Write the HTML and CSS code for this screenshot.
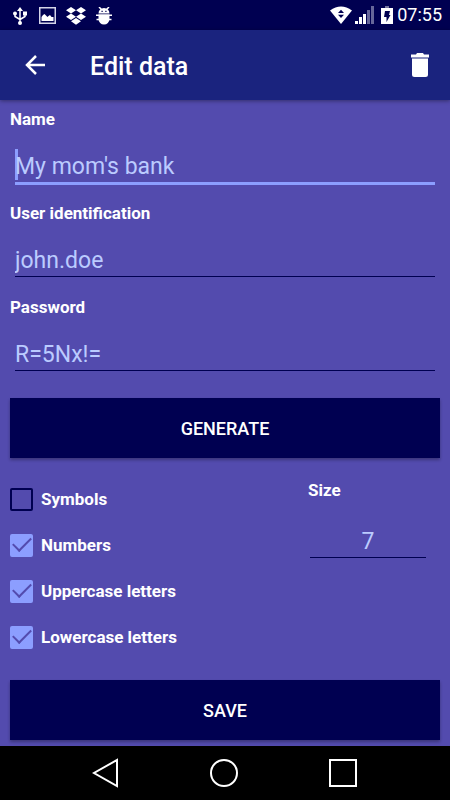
FILE: index.html
```html
<!DOCTYPE html>
<html lang="en">
<head>
    <meta charset="UTF-8">
    <meta name="viewport" content="width=device-width, initial-scale=1.0">
    <title>Edit data</title>
    <link rel="stylesheet" href="styles.css">
</head>
<body>
    <div class="status-bar">
        <div class="status-left">
            <!-- usb -->
            <svg width="14" height="18" viewBox="0 0 14 18">
                <path d="M7 2v14M2 6v3.500l5 3M12 6v3.500l-5 3" fill="none" stroke="#fff" stroke-width="1.500"/>
                <path d="M7 0l3 4H4z" fill="#fff"/>
                <circle cx="2" cy="6.500" r="2" fill="#fff"/>
                <path d="M10 4.500h4v4h-4z" fill="#fff"/>
                <circle cx="7" cy="16" r="2" fill="#fff"/>
            </svg>
            <!-- picture -->
            <svg width="17" height="17" viewBox="0 0 17 17">
                <rect x=".75" y=".75" width="15.500" height="15.500" fill="none" stroke="#d5d5e8" stroke-width="1.500"/>
                <path d="M2.500 14V10l1.500-2 1.500-1 2 2 1 1 1-1 1.500-1 1.500 2 2 0v4z" fill="#fff"/>
            </svg>
            <!-- dropbox -->
            <svg width="20" height="18" viewBox="0 0 20 18">
                <path d="M5 0l5 3.200-5 3.200-5-3.200zM15 0l5 3.200-5 3.200-5-3.200zM5 6.600l5 3.200-5 3.200-5-3.200zM15 6.600l5 3.200-5 3.200-5-3.200zM10 11l5 3.200-5 3.500-5-3.500z" fill="#fff"/>
            </svg>
            <!-- android debug -->
            <svg width="16" height="18" viewBox="0 0 16 18">
                <path d="M3 0l2.500 2.500M13 0l-2.500 2.500M0 8.200h16M.5 12.500h15" stroke="#fff" stroke-width="1.500"/>
                <path d="M2.500 6.500a5.500 5.500 0 0 1 11 0zM2.500 7.500h11V12a5.500 5.500 0 0 1-11 0z" fill="#fff"/>
                <path d="M5.500 3.800h1.200v1.200H5.500zM9.300 3.800h1.200v1.200H9.300z" fill="#000051"/>
            </svg>
        </div>
        <div class="status-right">
            <!-- wifi -->
            <svg width="22" height="18" viewBox="0 0 22 18">
                <path d="M0 4.500Q11-3.500 22 4.500L11 18z" fill="#fff"/>
                <path d="M11 3.800l3 3.200H8zM11 12l3-3.200H8z" fill="#000051"/>
            </svg>
            <!-- signal -->
            <svg class="signal" width="19" height="18" viewBox="0 0 19 18">
                <path d="M0 15h3v3H0zM4 11h3v7H4zM8 8h3v10H8z" fill="#fff"/>
                <path d="M12 4h3v14h-3zM16 0h3v18h-3z" fill="#66669a"/>
            </svg>
            <!-- battery -->
            <svg class="battery" width="12" height="18" viewBox="0 0 12 18">
                <path d="M4 0h4v2H4z" fill="#77779f"/>
                <path d="M0 2h12v16H0z" fill="#fff"/>
                <path d="M4 5h5L8 9h1.500L5.500 16V11H3z" fill="#000051"/>
            </svg>
            <span class="time">07:55</span>
        </div>
    </div>

    <header class="app-bar">
        <button type="button" class="icon-btn" aria-label="Back">
            <svg width="20" height="20" viewBox="0 0 20 20">
                <path d="M20 10H2M11 1L2 10l9 9" fill="none" stroke="#fff" stroke-width="2.500"/>
            </svg>
        </button>
        <h1>Edit data</h1>
        <button type="button" class="icon-btn" aria-label="Delete">
            <svg width="18" height="24" viewBox="0 0 18 24">
                <path d="M0 1.500h5L6 0h6l1 1.500h5V4.500H0zM1 5.500h16V21.500q0 2.500-2.500 2.500h-11Q1 24 1 21.500z" fill="#fff"/>
            </svg>
        </button>
    </header>

    <form class="content">
        <div class="field">
            <label for="name">Name</label>
            <input type="text" id="name" class="active" placeholder="My mom's bank">
        </div>
        <div class="field">
            <label for="user">User identification</label>
            <input type="text" id="user" placeholder="john.doe">
        </div>
        <div class="field">
            <label for="password">Password</label>
            <input type="text" id="password" placeholder="R=5Nx!=">
        </div>

        <button type="button" class="btn">GENERATE</button>

        <div class="options">
            <div class="checks">
                <label><input type="checkbox"> Symbols</label>
                <label><input type="checkbox" checked> Numbers</label>
                <label><input type="checkbox" checked> Uppercase letters</label>
                <label><input type="checkbox" checked> Lowercase letters</label>
            </div>
            <div class="size">
                <label for="size">Size</label>
                <input type="text" id="size" inputmode="numeric" placeholder="7">
            </div>
        </div>

        <button type="submit" class="btn">SAVE</button>
    </form>

    <nav class="nav-bar">
        <button type="button" aria-label="Back">
            <svg width="28" height="30" viewBox="0 0 28 30">
                <path d="M25 2v26L2 15z" fill="none" stroke="#fff" stroke-width="2"/>
            </svg>
        </button>
        <button type="button" aria-label="Home">
            <svg width="30" height="30" viewBox="0 0 30 30">
                <circle cx="15" cy="15" r="13" fill="none" stroke="#fff" stroke-width="2"/>
            </svg>
        </button>
        <button type="button" aria-label="Recent apps">
            <svg width="30" height="30" viewBox="0 0 30 30">
                <rect x="2" y="2" width="26" height="26" fill="none" stroke="#fff" stroke-width="2"/>
            </svg>
        </button>
    </nav>
</body>
</html>
```
FILE: styles.css
```css
* {
    box-sizing: border-box;
}
body {
    margin: 0;
    min-height: 100vh;
    display: flex;
    flex-direction: column;
    font-family: Roboto, sans-serif;
    background-color: #534bae;
    color: #fff;
}
button {
    border: none;
    padding: 0;
    background: none;
    color: inherit;
    font-family: inherit;
    cursor: pointer;
}
svg {
    display: block;
}
.status-bar {
    display: flex;
    justify-content: space-between;
    align-items: center;
    height: 30px;
    padding: 0 8px 0 13px;
    background-color: #000051;
}
.status-left {
    display: flex;
    align-items: center;
    gap: 10px;
    padding-top: 1px;
}
.status-left svg:first-child {
    margin-right: 2px;
}
.status-right {
    display: flex;
    align-items: center;
}
.signal {
    margin-left: 3px;
}
.battery {
    margin: 0 4px 0 7px;
}
.time {
    font-size: 18px;
    line-height: 30px;
}
.app-bar {
    display: flex;
    align-items: center;
    height: 70px;
    padding: 0 10px 0 15px;
    background-color: #1a237e;
    box-shadow: 0 1px 4px rgba(0,0,0,0.4);
}
.app-bar h1 {
    flex: 1;
    margin: 0 0 0 35px;
    padding-top: 4px;
    font-size: 25px;
    font-weight: 500;
    line-height: 30px;
}
.icon-btn {
    width: 40px;
    height: 40px;
    display: flex;
    align-items: center;
    justify-content: center;
}
.content {
    flex: 1;
    padding: 9px 10px 6px;
}
label {
    display: block;
    font-size: 17px;
    font-weight: 700;
    line-height: 20px;
}
input[type="text"] {
    display: block;
    height: 40px;
    border: none;
    padding: 2px 0 0;
    outline: none;
    color: #bbcbff;
    font-family: inherit;
    font-size: 23px;
    background: linear-gradient(#000051, #000051) left 0 bottom 2px / 100% 1px no-repeat;
}
input::placeholder {
    color: #bbcbff;
    opacity: 1;
}
.field {
    margin-bottom: 18px;
}
.field input {
    width: calc(100% - 10px);
    margin: 16px 5px 0;
}
/* thick underline and caret */
.field input.active {
    background:
        linear-gradient(#8c9eff, #8c9eff) left bottom / 100% 3px no-repeat,
        linear-gradient(#8c9eff, #8c9eff) left 4px / 3px 31px no-repeat;
}
.btn {
    display: block;
    width: 100%;
    height: 60px;
    margin-top: 25px;
    background-color: #000051;
    font-size: 18px;
    font-weight: 500;
    box-shadow: 0 2px 3px rgba(0,0,0,0.3);
}
.options {
    display: grid;
    grid-template-columns: 298fr 132fr;
    margin: 18px 0 20px;
}
.options + .btn {
    margin-top: 0;
}
.checks label {
    display: flex;
    align-items: center;
    gap: 8px;
    height: 46px;
}
.checks input {
    appearance: none;
    width: 23px;
    height: 23px;
    margin: 0;
    border: 2px solid #000051;
    border-radius: 2px;
}
.checks input:checked {
    display: grid;
    place-items: center;
    border-color: #8c9eff;
    background-color: #8c9eff;
}
.checks input:checked::before {
    content: "";
    width: 16px;
    height: 8px;
    border-left: 2px solid #534bae;
    border-bottom: 2px solid #534bae;
    transform: translateY(-3px) rotate(-45deg);
}
.size {
    padding-top: 4px;
}
.size input {
    width: 116px;
    margin: 20px 2px 0;
    text-align: center;
}
.nav-bar {
    display: flex;
    justify-content: center;
    gap: 89px;
    height: 54px;
    align-items: center;
    background-color: #000;
}
```
